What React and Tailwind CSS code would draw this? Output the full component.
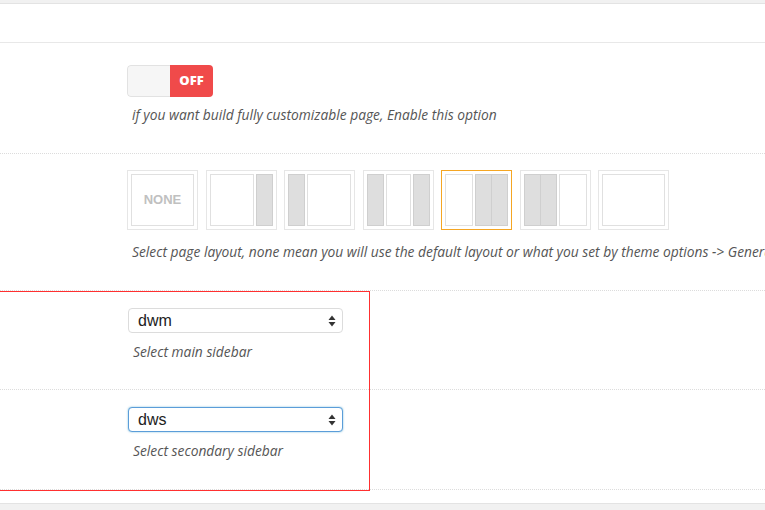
import React from "react";

const font = { fontFamily: "'Open Sans', 'Liberation Sans', sans-serif" };

function Toggle() {
  return (
    <div className="flex h-[32px] w-[86px] overflow-hidden rounded-[4px]">
      <div className="w-[43px] rounded-l-[4px] border border-r-0 border-[#e2e2e2] bg-[#f6f6f6]" />
      <div className="flex w-[43px] items-center justify-center bg-[#f04a4a] text-[13px] font-extrabold text-white">
        OFF
      </div>
    </div>
  );
}

function Side({ double }) {
  if (double) {
    return (
      <div className="flex w-[33px] border border-[#cfcfcf] bg-[#dedede]">
        <div className="flex-1 border-r border-[#cfcfcf]" />
        <div className="flex-1" />
      </div>
    );
  }
  return <div className="w-[17px] border border-[#cfcfcf] bg-[#dedede]" />;
}

function Main() {
  return <div className="flex-1 border border-[#e0e0e0] bg-white" />;
}

function LayoutBox({ children, selected }) {
  return (
    <div
      className={
        "flex h-[60px] w-[71px] gap-[2px] border p-[3px] " +
        (selected ? "border-[#f5a623]" : "border-[#e6e6e6]")
      }
    >
      {children}
    </div>
  );
}

function Layouts() {
  return (
    <div className="flex gap-[7.5px]">
      <LayoutBox>
        <div
          className="flex flex-1 items-center justify-center border border-[#e0e0e0] text-[13px] font-bold text-[#c0c0c0]"
          style={{ fontFamily: "'Liberation Sans', sans-serif" }}
        >
          NONE
        </div>
      </LayoutBox>
      <LayoutBox>
        <Main />
        <Side />
      </LayoutBox>
      <LayoutBox>
        <Side />
        <Main />
      </LayoutBox>
      <LayoutBox>
        <Side />
        <Main />
        <Side />
      </LayoutBox>
      <LayoutBox selected>
        <Main />
        <Side double />
      </LayoutBox>
      <LayoutBox>
        <Side double />
        <Main />
      </LayoutBox>
      <LayoutBox>
        <Main />
      </LayoutBox>
    </div>
  );
}

function Select({ value, focused }) {
  return (
    <div
      className={
        "flex h-[25px] w-[215px] items-center justify-between rounded-[4px] border bg-white pl-[9px] pr-[6px] " +
        (focused ? "border-[#5b9dd9] shadow-[0_0_2px_rgba(30,140,190,0.6)]" : "border-[#dcdcdc]")
      }
    >
      <span className="text-[16px] leading-none text-[#222]" style={{ fontFamily: "'Liberation Sans', sans-serif" }}>
        {value}
      </span>
      <svg width="8" height="12" viewBox="0 0 8 12">
        <path d="M4 0.5 L7.5 5 H0.5 Z" fill="#333" />
        <path d="M4 11.5 L7.5 7 H0.5 Z" fill="#333" />
      </svg>
    </div>
  );
}

function Desc({ children, className = "" }) {
  return (
    <p className={"whitespace-nowrap pl-[5px] text-[13.8px] italic leading-[18px] text-[#555] " + className}>
      {children}
    </p>
  );
}

export default function App() {
  return (
    <div className="h-[510px] w-[765px] overflow-hidden bg-white" style={font}>
      <div className="h-[4px] border-b border-[#e3e3e3] bg-[#f1f1f1]" />
      <div className="h-[39px] border-b border-[#e8e8e8]" />

      <div className="h-[111px] border-b border-dotted border-[#dcdcdc] pl-[127px] pt-[22px]">
        <Toggle />
        <Desc className="mt-[9px]">if you want build fully customizable page, Enable this option</Desc>
      </div>

      <div className="h-[137px] overflow-hidden border-b border-dotted border-[#dcdcdc] pl-[127px] pt-[16px]">
        <Layouts />
        <Desc className="mt-[13px]">
          Select page layout, none mean you will use the default layout or what you set by theme options -&gt; General
        </Desc>
      </div>

      <div className="relative">
        <div className="h-[99px] border-b border-dotted border-[#dcdcdc] pl-[128px] pt-[17px]">
          <Select value="dwm" />
          <Desc className="mt-[10px]">Select main sidebar</Desc>
        </div>
        <div className="h-[100px] border-b border-dotted border-[#dcdcdc] pl-[128px] pt-[17px]">
          <Select value="dws" focused />
          <Desc className="mt-[10px]">Select secondary sidebar</Desc>
        </div>
        <div className="pointer-events-none absolute left-[-2px] top-0 h-[200px] w-[372px] border border-[#ff3030]" />
      </div>

      <div className="h-[13px]" />
      <div className="h-[10px] border-t border-[#e3e3e3] bg-[#f1f1f1]" />
    </div>
  );
}
